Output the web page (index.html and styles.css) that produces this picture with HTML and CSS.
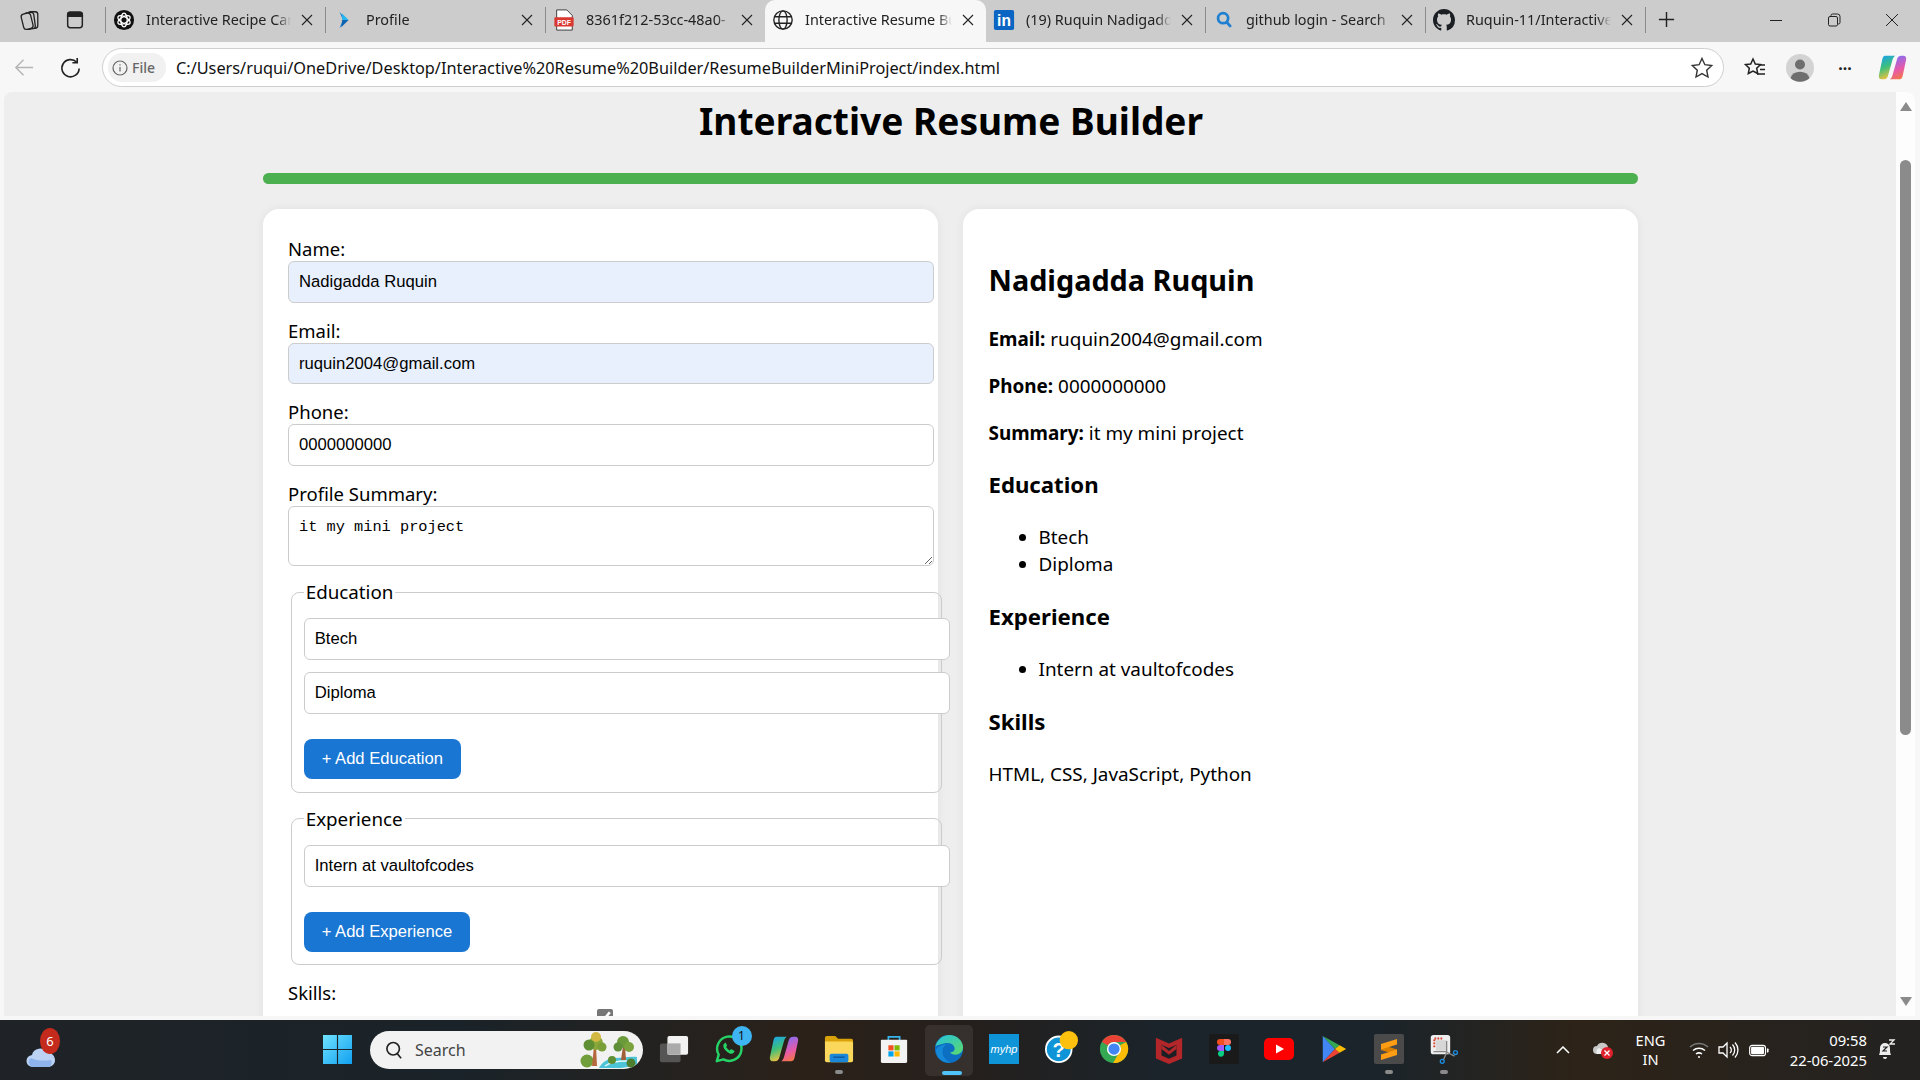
FILE: index.html
```html
<!DOCTYPE html>
<html lang="en">
<head>
<meta charset="utf-8">
<title>Interactive Resume Builder</title>
<link rel="stylesheet" href="styles.css">
</head>
<body>
<svg class="defs" aria-hidden="true"><defs>
  <symbol id="x" viewBox="0 0 12 12"><path d="m1 1 10 10M11 1 1 11" stroke="#222" stroke-width="1.100" fill="none"/></symbol>
  <linearGradient id="cpa" x1="0.2" y1="0" x2="0.5" y2="1"><stop offset="0" stop-color="#19a3e8"/><stop offset=".5" stop-color="#3fc07a"/><stop offset="1" stop-color="#f7c23c"/></linearGradient>
  <linearGradient id="cpb" x1="0.5" y1="1" x2="0.2" y2="0"><stop offset="0" stop-color="#8a6cf0"/><stop offset=".55" stop-color="#e85aa8"/><stop offset="1" stop-color="#f47a3a"/></linearGradient>
  <symbol id="cop" viewBox="0 0 32 32"><path d="M8 3h11c-1.500 1-2.500 2.500-3 4.500L11 25c-.6 2.500-2 4-5 4H4c-2.500 0-3.500-2-3-4.500L4.500 8C5 5 6 3 8 3z" fill="url(#cpa)"/><path transform="rotate(180 16 16)" d="M8 3h11c-1.500 1-2.500 2.500-3 4.500L11 25c-.6 2.500-2 4-5 4H4c-2.500 0-3.500-2-3-4.500L4.500 8C5 5 6 3 8 3z" fill="url(#cpb)"/></symbol>
</defs></svg>
<div class="tabbar">
  <div class="tb-lead">
    <svg class="ic20" viewBox="0 0 24 24" fill="none" stroke="#222" stroke-width="1.400"><rect x="10" y="3" width="10.500" height="18" rx="3"/><rect x="6.500" y="4" width="10.500" height="18" rx="3" transform="rotate(-8 11 13)" fill="#ccc"/><rect x="3.500" y="5" width="10.500" height="17" rx="3" transform="rotate(-14 8 13)" fill="#ccc"/></svg>
  </div>
  <div class="tb-lead">
    <svg class="ic20" viewBox="0 0 24 24" fill="none" stroke="#222" stroke-width="1.600"><rect x="4" y="3.500" width="16" height="17" rx="3"/><path d="M4 8h16V6a2.500 2.500 0 0 0-2.500-2.500h-11A2.500 2.500 0 0 0 4 6z" fill="#222"/></svg>
  </div>
  <span class="sep first"></span>
  <div class="tab">
    <svg class="ticon" viewBox="0 0 24 24"><circle cx="12" cy="12" r="11" fill="#111"/><g fill="none" stroke="#fff" stroke-width="1.400"><ellipse cx="12" cy="12" rx="7.500" ry="3.500" transform="rotate(30 12 12)"/><ellipse cx="12" cy="12" rx="7.500" ry="3.500" transform="rotate(90 12 12)"/><ellipse cx="12" cy="12" rx="7.500" ry="3.500" transform="rotate(150 12 12)"/></g></svg>
    <span class="ttext">Interactive Recipe Car</span><svg class="tx"><use href="#x"/></svg>
  </div>
  <span class="sep"></span>
  <div class="tab">
    <svg class="ticon" viewBox="0 0 24 24"><path d="M7 3 15 12 7 21 11 12z" fill="#0e7fd6"/><path d="M10 5 17 12 10 12z" fill="#27b7f0"/><path d="M10 12H17L9 20z" fill="#0e63b0"/></svg>
    <span class="ttext">Profile</span><svg class="tx"><use href="#x"/></svg>
  </div>
  <span class="sep"></span>
  <div class="tab">
    <svg class="ticon" viewBox="0 0 24 24"><path d="M4 1h11l6 6v16H4z" fill="#fff" stroke="#333"/><rect x="1.500" y="9" width="21" height="10" rx="1" fill="#d93831"/><text x="12" y="17" class="pdf" text-anchor="middle">PDF</text></svg>
    <span class="ttext">8361f212-53cc-48a0-</span><svg class="tx"><use href="#x"/></svg>
  </div>
  <div class="tab active">
    <svg class="ticon" viewBox="0 0 24 24" fill="none" stroke="#222" stroke-width="1.500"><circle cx="12" cy="12" r="10"/><ellipse cx="12" cy="12" rx="4.500" ry="10"/><path d="M2.500 8.500h19M2.500 15.500h19"/></svg>
    <span class="ttext">Interactive Resume Bu</span><svg class="tx"><use href="#x"/></svg>
  </div>
  <div class="tab">
    <svg class="ticon" viewBox="0 0 24 24"><rect x="1" y="1" width="22" height="22" rx="2" fill="#0a66c2"/><text x="12" y="18.500" class="in" text-anchor="middle">in</text></svg>
    <span class="ttext">(19) Ruquin Nadigadd</span><svg class="tx"><use href="#x"/></svg>
  </div>
  <span class="sep"></span>
  <div class="tab">
    <svg class="ticon" viewBox="0 0 24 24" fill="none" stroke="#1f7fd1" stroke-width="3"><circle cx="11" cy="10" r="5.500"/><path d="m15 14.500 4.500 5"/></svg>
    <span class="ttext">github login - Search</span><svg class="tx"><use href="#x"/></svg>
  </div>
  <span class="sep"></span>
  <div class="tab">
    <svg class="ticon" viewBox="0 0 16 16"><path fill="#1b1f23" d="M8 0C3.580 0 0 3.580 0 8c0 3.540 2.290 6.530 5.470 7.590.4.070.55-.17.55-.38 0-.19-.01-.82-.01-1.490-2.010.37-2.530-.49-2.690-.94-.09-.23-.48-.94-.82-1.130-.28-.15-.68-.52-.01-.53.63-.01 1.080.58 1.230.82.72 1.210 1.870.87 2.330.66.07-.52.28-.87.51-1.070-1.780-.2-3.640-.89-3.640-3.950 0-.87.31-1.590.82-2.150-.08-.2-.36-1.020.08-2.120 0 0 .67-.21 2.200.82.64-.18 1.320-.27 2-.27.68 0 1.360.09 2 .27 1.530-1.040 2.200-.82 2.200-.82.44 1.100.16 1.920.08 2.120.51.56.82 1.270.82 2.150 0 3.070-1.870 3.750-3.650 3.950.29.25.54.73.54 1.480 0 1.070-.01 1.930-.01 2.200 0 .21.15.46.55.38A8.013 8.013 0 0 0 16 8c0-4.420-3.580-8-8-8z"/></svg>
    <span class="ttext">Ruquin-11/Interactive</span><svg class="tx"><use href="#x"/></svg>
  </div>
  <span class="sep"></span>
  <svg class="plus" viewBox="0 0 20 20" stroke="#222" stroke-width="1.500"><path d="M10 2v16M2 10h16"/></svg>
  <div class="winctl">
    <svg class="wc" viewBox="0 0 14 14" stroke="#222" fill="none"><path d="M1 7.500h12"/></svg>
    <svg class="wc" viewBox="0 0 14 14" stroke="#222" fill="none"><rect x="1.500" y="3.500" width="9" height="9.500" rx="1.500"/><path d="M4 3.500V2.500A1.500 1.500 0 0 1 5.500 1h5A2.500 2.500 0 0 1 13 3.500v6A1.500 1.500 0 0 1 11.500 11h-1"/></svg>
    <svg class="wc" viewBox="0 0 14 14" stroke="#222" fill="none"><path d="m1 1 12 12M13 1 1 13"/></svg>
  </div>
</div>

<div class="toolbar">
  <svg class="nav back" viewBox="0 0 24 24" fill="none" stroke="#b5b5b5" stroke-width="1.500"><path d="M21 12H3m8-8-8 8 8 8"/></svg>
  <svg class="nav reload" viewBox="0 0 24 24" fill="none" stroke="#222" stroke-width="1.700"><path d="M18.500 6.500A9 9 0 1 0 21 13"/><path d="M19 2v5h-5"/></svg>
  <div class="omni">
    <span class="filepill">
      <svg class="info" viewBox="0 0 16 16" fill="none" stroke="#666" stroke-width="1.200"><circle cx="8" cy="8" r="7"/><path d="M8 7v4.500M8 4.200v1.300"/></svg>
      File
    </span>
    <span class="url">C:/Users/ruqui/OneDrive/Desktop/Interactive%20Resume%20Builder/ResumeBuilderMiniProject/index.html</span>
    <svg class="star" viewBox="0 0 24 24" fill="none" stroke="#333" stroke-width="1.400"><path d="m12 2.500 2.900 6.200 6.800.8-5 4.700 1.300 6.800L12 17.600l-6 3.400 1.300-6.800-5-4.700 6.800-.8z"/></svg>
  </div>
  <svg class="tool favs" viewBox="0 0 24 24" fill="none" stroke="#222" stroke-width="1.500"><path d="m10 3 2.300 5 5.200.6-3.800 3.600 1 5.300L10 15l-4.700 2.500 1-5.300L2.500 8.600 7.700 8z"/><path d="M16 9h6M17 13.500h5M14 18h8"/></svg>
  <span class="avatar"><svg viewBox="0 0 28 28"><circle cx="14" cy="14" r="14" fill="#d3d3d3"/><circle cx="14" cy="10.500" r="5" fill="#6e6e6e"/><path d="M4.500 24a10 9 0 0 1 19 0 14 14 0 0 1-19 0z" fill="#6e6e6e"/></svg></span>
  <span class="dots">···</span>
  <svg class="tool copilot"><use href="#cop"/></svg>
</div>

<main class="viewport">
  <div class="frame">
    <div class="page">
      <h1 class="title">Interactive Resume Builder</h1>
      <div class="wrap">
        <div class="progress"></div>
        <div class="cols">
          <form class="card form-card">
            <label class="lbl">Name:</label>
            <input class="field auto" type="text" value="Nadigadda Ruquin">
            <label class="lbl">Email:</label>
            <input class="field auto" type="text" value="ruquin2004@gmail.com">
            <label class="lbl">Phone:</label>
            <input class="field" type="text" value="0000000000">
            <label class="lbl">Profile Summary:</label>
            <textarea class="area">it my mini project</textarea>
            <fieldset class="group">
              <legend>Education</legend>
              <input class="field tight" type="text" value="Btech">
              <input class="field tight" type="text" value="Diploma">
              <button type="button" class="add">+ Add Education</button>
            </fieldset>
            <fieldset class="group">
              <legend>Experience</legend>
              <input class="field tight" type="text" value="Intern at vaultofcodes">
              <button type="button" class="add">+ Add Experience</button>
            </fieldset>
            <label class="lbl skills">Skills:</label>
            <input class="check" type="checkbox" checked>
          </form>
          <section class="card preview">
            <h2>Nadigadda Ruquin</h2>
            <p><strong>Email:</strong> ruquin2004@gmail.com</p>
            <p><strong>Phone:</strong> 0000000000</p>
            <p><strong>Summary:</strong> it my mini project</p>
            <h3>Education</h3>
            <ul><li>Btech</li><li>Diploma</li></ul>
            <h3>Experience</h3>
            <ul><li>Intern at vaultofcodes</li></ul>
            <h3>Skills</h3>
            <p>HTML, CSS, JavaScript, Python</p>
          </section>
        </div>
      </div>
    </div>
    <div class="scrollbar">
      <span class="arrow up"></span>
      <span class="thumb"></span>
      <span class="arrow down"></span>
    </div>
  </div>
</main>

<footer class="taskbar">
  <div class="weather">
    <svg viewBox="0 0 32 32"><circle cx="23" cy="13" r="4" fill="#f39c3d"/><path d="M8 28a6 6 0 0 1-1-12 8 8 0 0 1 15-2 7 7 0 0 1 2 14z" fill="#bcd3f4"/><path d="M7 28a5 5 0 0 1-1-9c6 3 13 3 20 2a5 5 0 0 1-2 7z" fill="#8fb4ec"/></svg>
    <span class="wbadge">6</span>
  </div>
  <div class="cell start">
    <svg viewBox="0 0 30 30"><defs><linearGradient id="win" x1="0" y1="0" x2="1" y2="1"><stop offset="0" stop-color="#6fe3ff"/><stop offset="1" stop-color="#11a0f0"/></linearGradient></defs><path fill="url(#win)" d="M0 0h14.400v14.400H0zM15.600 0H30v14.400H15.600zM0 15.600h14.400V30H0zM15.600 15.600H30V30H15.600z"/></svg>
  </div>
  <div class="search">
    <svg class="mag" viewBox="0 0 24 24" fill="none" stroke="#222" stroke-width="2"><circle cx="11" cy="10.500" r="7.500"/><path d="m16 16.500 4.500 5.500"/></svg>
    <span class="stext">Search</span>
    <svg class="trees" viewBox="0 0 58 36"><path d="M20 36c4-7 10-10 16-10 8 0 14-2 22-1v7c-4 3-26 6-38 4z" fill="#4cc3d6"/><path d="M26 34c5-4 12-5 22-5" stroke="#e6f7fa" stroke-width="1.500" fill="none"/><circle cx="8" cy="29" r="6.500" fill="#6f9e3a"/><path d="M13 34 15 14h2l1 20z" fill="#b5683c"/><circle cx="17" cy="11" r="7" fill="#8aa83a"/><circle cx="17" cy="5" r="5" fill="#d2b843"/><circle cx="10" cy="13" r="5.500" fill="#5f8f35"/><circle cx="23" cy="15" r="4.500" fill="#7a9e38"/><path d="M42 28l2-14h2l1 14z" fill="#a0603a"/><circle cx="44" cy="10" r="6" fill="#6a9a3a"/><circle cx="39" cy="15" r="4.500" fill="#5e8f38"/><circle cx="50" cy="15" r="5" fill="#7aa33d"/><circle cx="33" cy="28" r="4" fill="#5f8f35"/><circle cx="52" cy="31" r="4.500" fill="#4e7f30"/></svg>
  </div>
  <div class="cell">
    <svg viewBox="0 0 32 32"><rect x="1" y="10" width="22" height="20" rx="2" fill="#555"/><rect x="9" y="2" width="22" height="20" rx="2" fill="#f2f2f2"/><rect x="9" y="10" width="14" height="12" fill="#aaa"/></svg>
  </div>
  <div class="cell">
    <svg viewBox="0 0 32 32" fill="none"><path d="M3 29l2-7a13 13 0 1 1 5 5z" stroke="#25d366" stroke-width="2.600" stroke-linejoin="round"/><path d="M11 10c-2 2-1 5 2 8s6 4 8 2l1-2-4-2-1 1.500c-1 0-4-3-4-4l1-1-1.500-3.500z" fill="#25d366"/></svg>
    <span class="nbadge">1</span>
  </div>
  <div class="cell">
    <svg><use href="#cop"/></svg>
  </div>
  <div class="cell">
    <svg viewBox="0 0 32 32"><path d="M1 4a2 2 0 0 1 2-2h9l3 3h14a2 2 0 0 1 2 2v4H1z" fill="#d9a20b"/><path d="M1 8h28a2 2 0 0 1 2 2v18a2 2 0 0 1-2 2H3a2 2 0 0 1-2-2z" fill="#fbd85c"/><rect x="6" y="21" width="20" height="9" rx="2" fill="#1b87d8"/><rect x="10" y="24" width="12" height="1.500" fill="#0b5a9e"/></svg>
    <i class="dot"></i>
  </div>
  <div class="cell">
    <svg viewBox="0 0 32 32"><path d="M10 7V3h12v4" fill="none" stroke="#34b5f0" stroke-width="1.800"/><path d="M3 6h26a1 1 0 0 1 1 1v22a2 2 0 0 1-2 2H4a2 2 0 0 1-2-2V7a1 1 0 0 1 1-1z" fill="#f3f3f3"/><rect x="10" y="12" width="5.500" height="5.500" fill="#f25022"/><rect x="16.500" y="12" width="5.500" height="5.500" fill="#7fba00"/><rect x="10" y="18.500" width="5.500" height="5.500" fill="#00a4ef"/><rect x="16.500" y="18.500" width="5.500" height="5.500" fill="#ffb900"/></svg>
  </div>
  <div class="cell edge">
    <svg viewBox="0 0 32 32"><defs><linearGradient id="ed1" x1="0" y1="0" x2="1" y2="1"><stop offset="0" stop-color="#25c2e0"/><stop offset="1" stop-color="#5dd86a"/></linearGradient></defs><circle cx="16" cy="16" r="15" fill="#0c6fc2"/><path d="M1.500 13C4 5 10 1 16 1c9 0 15 7 15 13 0 5-4 8-8 8-3 0-5-1-6-2.500 4 0 5-2 5-4 0-3-3-6-7-6-6 0-12 3-14.500 3.500z" fill="url(#ed1)"/><path d="M16 11c-4 0-7 3-7 8 0 5 4 10 9 11.500-6 1-16-3-16-14 4-4 9-6 14-5z" fill="#1588d8"/></svg>
    <i class="active-bar"></i>
  </div>
  <div class="cell">
    <svg viewBox="0 0 30 30"><rect width="30" height="30" fill="#0f95d7"/><text x="15" y="19" class="myhp" text-anchor="middle">myhp</text></svg>
  </div>
  <div class="cell help">
    <svg viewBox="0 0 36 36"><circle cx="15" cy="20" r="14" fill="#0f95d7" stroke="#fff" stroke-width="2"/><text x="15" y="28" class="qm" text-anchor="middle">?</text><circle cx="26" cy="10" r="10" fill="#fdc00f"/></svg>
  </div>
  <div class="cell">
    <svg viewBox="0 0 32 32"><circle cx="16" cy="16" r="15" fill="#34a853"/><path d="M16 1a15 15 0 0 1 13 7.500H16a7.500 7.500 0 0 0-6.500 3.700L3 8.500A15 15 0 0 1 16 1z" fill="#ea4335"/><path d="M29 8.500A15 15 0 0 1 15 31l6.500-11.300A7.500 7.500 0 0 0 22.500 12z" fill="#fbbc05"/><circle cx="16" cy="16" r="7.500" fill="#fff"/><circle cx="16" cy="16" r="6" fill="#4285f4"/></svg>
  </div>
  <div class="cell">
    <svg viewBox="0 0 30 32"><path d="M1 4l14 6 14-6v22l-14 6-14-6z" fill="#b3262a"/><path d="M7 11.500l8 3.500 8-3.500V23l-8 3.500L7 23z" fill="#1c2024"/><path d="M7 11.500 15 18l8-6.500V16l-8 6-8-6z" fill="#b3262a"/></svg>
  </div>
  <div class="cell">
    <svg viewBox="0 0 30 30"><rect width="30" height="30" rx="2" fill="#1a1a1a"/><path d="M15 5h-4a3 3 0 0 0 0 6h4z" fill="#f24e1e"/><path d="M15 5h4a3 3 0 0 1 0 6h-4z" fill="#ff7262"/><path d="M15 11h-4a3 3 0 0 0 0 6h4z" fill="#a259ff"/><circle cx="19" cy="14" r="3" fill="#1abcfe"/><path d="M11 17h4v3a3 3 0 1 1-4-3z" fill="#0acf83"/></svg>
  </div>
  <div class="cell">
    <svg viewBox="0 0 30 22" class="yt"><rect width="30" height="22" rx="5" fill="#f00"/><path d="M12 6.500 20 11l-8 4.500z" fill="#fff"/></svg>
  </div>
  <div class="cell">
    <svg viewBox="0 0 28 32"><path d="M2 2 15 16 2 30z" fill="#4285f4"/><path d="M2 2l18 10-5 4z" fill="#34a853"/><path d="M2 30l18-10-5-4z" fill="#ea4335"/><path d="M20 12l7 4-7 4-5-4z" fill="#fbbc05"/></svg>
  </div>
  <div class="cell">
    <svg viewBox="0 0 30 30"><rect width="30" height="30" rx="2" fill="#4a4a4a"/><path d="M7 10.500 23 15.500V21L7 16z" fill="#d97f00"/><path d="M23 5v5.500L7 15.500V10z" fill="#ff9d14"/><path d="M23 15.500V21L7 26v-5.500z" fill="#ff9d14"/></svg>
    <i class="dot"></i>
  </div>
  <div class="cell">
    <svg viewBox="0 0 32 34"><rect x="1" y="1" width="22" height="22" rx="3" fill="#eee"/><path d="M5 15V5h10" fill="none" stroke="#d5412f" stroke-width="2.200" stroke-dasharray="2 1.400"/><rect x="7" y="7" width="12" height="12" fill="#d7d7d7"/><path d="M19 8v13L15 30M4 20h14l10 5" fill="none" stroke="#888" stroke-width="1.500"/><circle cx="14" cy="31" r="2.200" fill="none" stroke="#1b8ce0" stroke-width="1.500"/><circle cx="29" cy="21" r="2.200" fill="none" stroke="#1b8ce0" stroke-width="1.500"/></svg>
    <i class="dot"></i>
  </div>
  <div class="tray">
    <svg class="t-chev" viewBox="0 0 14 8" fill="none" stroke="#fff" stroke-width="1.500"><path d="m1 7 6-6 6 6"/></svg>
    <svg class="t-od" viewBox="0 0 22 18"><path d="M5 13a4 4 0 0 1 0-8 6 6 0 0 1 11 1v7z" fill="#c8c8c8"/><path d="M5 13a4 4 0 0 1 2-6c3 2 5 3 6 6z" fill="#eee"/><circle cx="15" cy="12" r="6" fill="#e0202c"/><path d="m12.500 9.500 5 5m0-5-5 5" stroke="#fff" stroke-width="1.400"/></svg>
    <div class="t-lang"><span>ENG</span><span>IN</span></div>
    <svg class="t-wifi" viewBox="0 0 22 18" fill="none" stroke="#fff" stroke-width="1.500"><path d="M2 6a13 13 0 0 1 18 0" stroke="#777"/><path d="M5 9.500a9 9 0 0 1 12 0M8 13a5 5 0 0 1 6 0"/><circle cx="11" cy="16" r="1" fill="#fff" stroke="none"/></svg>
    <svg class="t-vol" viewBox="0 0 22 18" fill="none" stroke="#fff" stroke-width="1.300"><path d="M2 6h4l4-4v14l-4-4H2z"/><path d="M13 6a4 4 0 0 1 0 6M15.500 3.500a8 8 0 0 1 0 11M18 1.500a11 11 0 0 1 0 15"/></svg>
    <svg class="t-bat" viewBox="0 0 24 14"><rect x=".8" y=".8" width="19" height="12.400" rx="3" fill="none" stroke="#fff" stroke-width="1.400"/><rect x="2.500" y="2.500" width="15.500" height="9" rx="1.500" fill="#fff"/><path d="M21.500 4.500h1a1 1 0 0 1 1 1v3a1 1 0 0 1-1 1h-1z" fill="#fff"/></svg>
    <div class="t-clock"><span>09:58</span><span>22-06-2025</span></div>
    <svg class="t-bell" viewBox="0 0 20 22"><path d="M3 16c1-2 1-4 1-7a5 5 0 0 1 10 0c0 3 0 5 1 7z" fill="#eee"/><path d="M7 18a2 2 0 0 0 4 0z" fill="#eee"/><path d="M7 8h4l-4 4h4" fill="none" stroke="#222" stroke-width="1.200"/><path d="M13 1h5l-4 4h5" fill="none" stroke="#eee" stroke-width="1.300"/></svg>
  </div>
</footer>
</body>
</html>
```

FILE: styles.css
```css
* { box-sizing: border-box; }
html, body { margin: 0; height: 100%; overflow: hidden; }
body {
  display: flex;
  flex-direction: column;
  height: 1080px;
  font-family: "Noto Sans", "Open Sans", sans-serif;
  color: #000;
  background: #f7f7f7;
}
.defs { flex: none; width: 0; height: 0; overflow: hidden; }

/* tab strip */
.tabbar {
  flex: 0 0 42px;
  display: flex;
  align-items: center;
  background: #cccccc;
}
.tb-lead { flex: none; width: 45px; height: 42px; padding-bottom: 2px; display: flex; align-items: center; justify-content: center; }
.tb-lead:first-child { margin-left: 7px; }
.ic20 { width: 22px; height: 22px; }
.sep { flex: none; width: 1px; height: 26px; margin-bottom: 2px; background: #8a8a8a; }
.sep.first { margin-left: 8px; }
.tab {
  flex: none;
  width: 219px;
  height: 42px;
  display: flex;
  align-items: center;
  padding: 0 8px 3px 7px;
  font-size: 14.400px;
  color: #222;
}
.tab.active {
  width: 221px;
  background: #f7f7f7;
  border-radius: 10px 10px 0 0;
}
.ticon { flex: none; width: 22px; height: 22px; margin-right: 11px; }
.ttext {
  flex: 1;
  min-width: 0;
  white-space: nowrap;
  overflow: hidden;
  -webkit-mask-image: linear-gradient(90deg, #000 calc(100% - 18px), transparent calc(100% - 4px));
  mask-image: linear-gradient(90deg, #000 calc(100% - 18px), transparent calc(100% - 4px));
}
.tx { flex: none; width: 12px; height: 12px; margin: 0 4px 0 6px; }
.pdf { font: 700 7.500px "Liberation Sans", sans-serif; fill: #fff; }
.in { font: 700 17px "Liberation Sans", sans-serif; fill: #fff; }
.plus { flex: none; width: 19px; height: 19px; margin: 0 0 3px 11px; }
.winctl { margin-left: auto; margin-bottom: 3px; display: flex; align-items: center; gap: 44px; padding-right: 21px; }
.wc { width: 14px; height: 14px; }

/* address row */
.toolbar {
  flex: 0 0 50px;
  display: flex;
  align-items: center;
  background: #f7f7f7;
  padding-top: 1px;
}
.nav { flex: none; width: 23px; height: 23px; }
.back { margin-left: 13px; }
.reload { margin-left: 23px; margin-right: 20px; }
.omni {
  flex: none;
  width: 1622px;
  height: 39px;
  display: flex;
  align-items: center;
  background: #fff;
  border: 1px solid #cfcfcf;
  border-radius: 20px;
  padding: 0 9px 0 5px;
}
.filepill {
  flex: none;
  width: 58px;
  height: 29px;
  display: flex;
  align-items: center;
  gap: 4px;
  padding-left: 4px;
  background: #f1f1f1;
  border-radius: 14px;
  font-size: 14px;
  font-weight: 500;
  color: #666;
}
.info { width: 16px; height: 16px; }
.url { margin-left: 10px; font-size: 16.300px; color: #111; white-space: nowrap; flex: 1; }
.star { flex: none; width: 24px; height: 24px; }
.tool { flex: none; }
.favs { width: 24px; height: 24px; margin-left: 19px; }
.avatar { flex: none; width: 28px; height: 28px; margin-left: 19px; }
.avatar svg { display: block; width: 28px; height: 28px; }
.dots { flex: none; width: 30px; margin-left: 16px; text-align: center; font-size: 16px; font-weight: 700; color: #222; }
.copilot { width: 29px; height: 29px; margin-left: 18px; }

/* viewport */
.viewport {
  flex: none;
  height: 928px;
  padding: 0 5px 4px 4px;
  background: #f7f7f7;
}
.frame {
  display: flex;
  height: 924px;
  overflow: hidden;
  border-radius: 8px 8px 0 0;
  background: #eeeeee;
}
.page { flex: 1; min-width: 0; overflow: hidden; padding-top: 4px; }
.title {
  margin: 0;
  height: 50px;
  line-height: 50px;
  padding-left: 2px;
  text-align: center;
  font-size: 37.100px;
  font-weight: 700;
}
.wrap { width: 1375px; margin: 0 auto; }
.progress { height: 11px; margin-top: 27px; background: #4caf50; border-radius: 6px; }
.cols { display: grid; grid-template-columns: 675px 674.500px; gap: 25.500px; margin-top: 25px; }
.card {
  background: #fff;
  border-radius: 16px;
  box-shadow: 0 0 10px rgba(0, 0, 0, .06);
  padding: 28px 25px 25px 25.500px;
  min-height: 900px;
  font-size: 18.900px;
}
.lbl { display: block; height: 24px; line-height: 24px; font-size: 18.500px; }
.field {
  display: block;
  width: 646px;
  height: 41.700px;
  margin: 0 0 16px;
  padding: 10px;
  border: 1px solid #cccccc;
  border-radius: 6px;
  background: #fff;
  font: 16.670px "Liberation Sans", Arial, sans-serif;
  color: #000;
}
.field.auto { background: #e8f0fe; }
.field.tight { margin-bottom: 12px; height: 42px; }
.area {
  display: block;
  width: 646px;
  height: 60px;
  margin: 0;
  padding: 11px 10px 10px;
  border: 1px solid #cccccc;
  border-radius: 6px;
  font: 15.300px/18px "Liberation Mono", monospace;
  color: #000;
  resize: vertical;
}
.group {
  display: block;
  width: 651px;
  margin: 14px 0 0 3px;
  padding: 0 11.700px 12.500px;
  border: 1px solid #cccccc;
  border-radius: 8px;
  min-width: 0;
}
.group legend { padding: 0 2px; height: 24px; line-height: 24px; font-size: 18.800px; }
.group .field:first-of-type { margin-top: 14px; }
.add {
  display: block;
  height: 40px;
  margin-top: 25px;
  padding: 0 18px;
  border: 0;
  border-radius: 8px;
  background: #1976d2;
  color: #fff;
  font: 16.600px "Liberation Sans", Arial, sans-serif;
}
.skills { margin-top: 16px; }
.check {
  display: block;
  width: 16px;
  height: 16px;
  margin: 4px 0 0 309px;
  accent-color: #767676;
}

/* preview */
.preview h2 { margin: 24px 0 28px; height: 38px; line-height: 38px; font-size: 28.800px; font-weight: 700; }
.preview h3 { margin: 25px 0 24px; height: 30px; line-height: 30px; font-size: 22.200px; font-weight: 700; }
.preview p { margin: 0 0 23px; height: 24px; line-height: 24px; }
.preview ul { margin: 0; padding-left: 50px; }
.preview li { height: 27px; line-height: 27px; }
.preview ul + h3 { margin-top: 24px; }
.preview h3 + p { margin-top: 25px; }

/* scrollbar */
.scrollbar {
  flex: none;
  width: 19px;
  display: flex;
  flex-direction: column;
  align-items: center;
  padding-top: 10px;
  background: #fdfdfd;
}
.arrow { flex: none; width: 0; height: 0; border-left: 6.500px solid transparent; border-right: 6.500px solid transparent; }
.arrow.up { border-bottom: 9px solid #8b8b8b; }
.arrow.down { border-top: 9px solid #8b8b8b; margin-top: auto; margin-bottom: 10px; }
.thumb { flex: none; width: 11px; height: 575px; margin-top: 49px; background: #8b8b8b; border-radius: 6px; }

/* taskbar */
.taskbar {
  flex: 0 0 60px;
  display: flex;
  align-items: stretch;
  color: #fff;
  background: linear-gradient(90deg, #1f2327 0, #1a2329 24%, #2b2119 42%, #251f1c 50%, #1b242a 60%, #1b242a 72%, #2d2318 82%, #232221 100%);
}
.weather { flex: none; width: 310px; position: relative; }
.weather svg { position: absolute; left: 25px; top: 19px; width: 32px; height: 32px; }
.wbadge {
  position: absolute; left: 40px; top: 8px;
  width: 20px; height: 26px;
  border-radius: 50%;
  background: #c42b1c;
  color: #fff;
  font-size: 13px;
  line-height: 26px;
  text-align: center;
}
.cell {
  flex: none;
  width: 55px;
  height: 60px;
  position: relative;
  display: flex;
  align-items: center;
  justify-content: center;
  padding-bottom: 2px;
}
.cell svg { width: 30px; height: 30px; }
.cell svg.yt { height: 22px; }
.cell.help svg { width: 33px; height: 33px; margin-left: 4px; margin-top: -3px; }
.start svg { width: 29px; height: 29px; }
.search {
  flex: none;
  width: 273px;
  height: 38px;
  margin: 11px 3.500px 0 5px;
  display: flex;
  align-items: center;
  padding: 0 6px 0 14px;
  background: #f2f2f2;
  border-radius: 19px;
  color: #444;
  font-size: 16px;
}
.mag { flex: none; width: 20px; height: 22px; }
.stext { margin-left: 11px; flex: 1; }
.trees { flex: none; width: 58px; height: 36px; }
.nbadge {
  position: absolute; left: 30px; top: 6px;
  width: 20px; height: 20px;
  border-radius: 50%;
  background: #3fb4f2;
  color: #111;
  font-size: 12px;
  line-height: 20px;
  text-align: center;
}
.dot { position: absolute; left: 23.500px; bottom: 6px; width: 8px; height: 4px; border-radius: 2px; background: #8a8a8a; }
.edge::before { content: ""; position: absolute; left: 3px; right: 4px; top: 5px; bottom: 4px; background: rgba(255, 255, 255, .08); border-radius: 5px; }
.edge svg { position: relative; }
.active-bar { position: absolute; left: 20px; bottom: 5px; width: 20px; height: 4px; border-radius: 2px; background: #4fc3f7; }
.myhp { font: italic 11px "Liberation Sans", sans-serif; fill: #fff; }
.qm { font: 700 22px "Liberation Sans", sans-serif; fill: #fff; }
.tray { flex: 1; display: flex; align-items: center; position: relative; min-width: 0; font-size: 14px; }
.tray svg { flex: none; }
.t-chev { width: 14px; height: 8px; margin-left: 84px; }
.t-od { width: 22px; height: 18px; margin-left: 22px; }
.t-lang { width: 40px; margin-left: 17px; display: flex; flex-direction: column; align-items: center; line-height: 19px; font-size: 14.600px; }
.t-wifi { width: 22px; height: 18px; margin-left: 17px; }
.t-vol { width: 22px; height: 18px; margin-left: 7px; }
.t-bat { width: 20px; height: 13px; margin-left: 10px; }
.t-clock { margin-left: auto; width: 90px; display: flex; flex-direction: column; align-items: flex-end; line-height: 20px; font-size: 14.800px; }
.t-bell { width: 20px; height: 22px; margin: 0 24px 0 9px; }
```
